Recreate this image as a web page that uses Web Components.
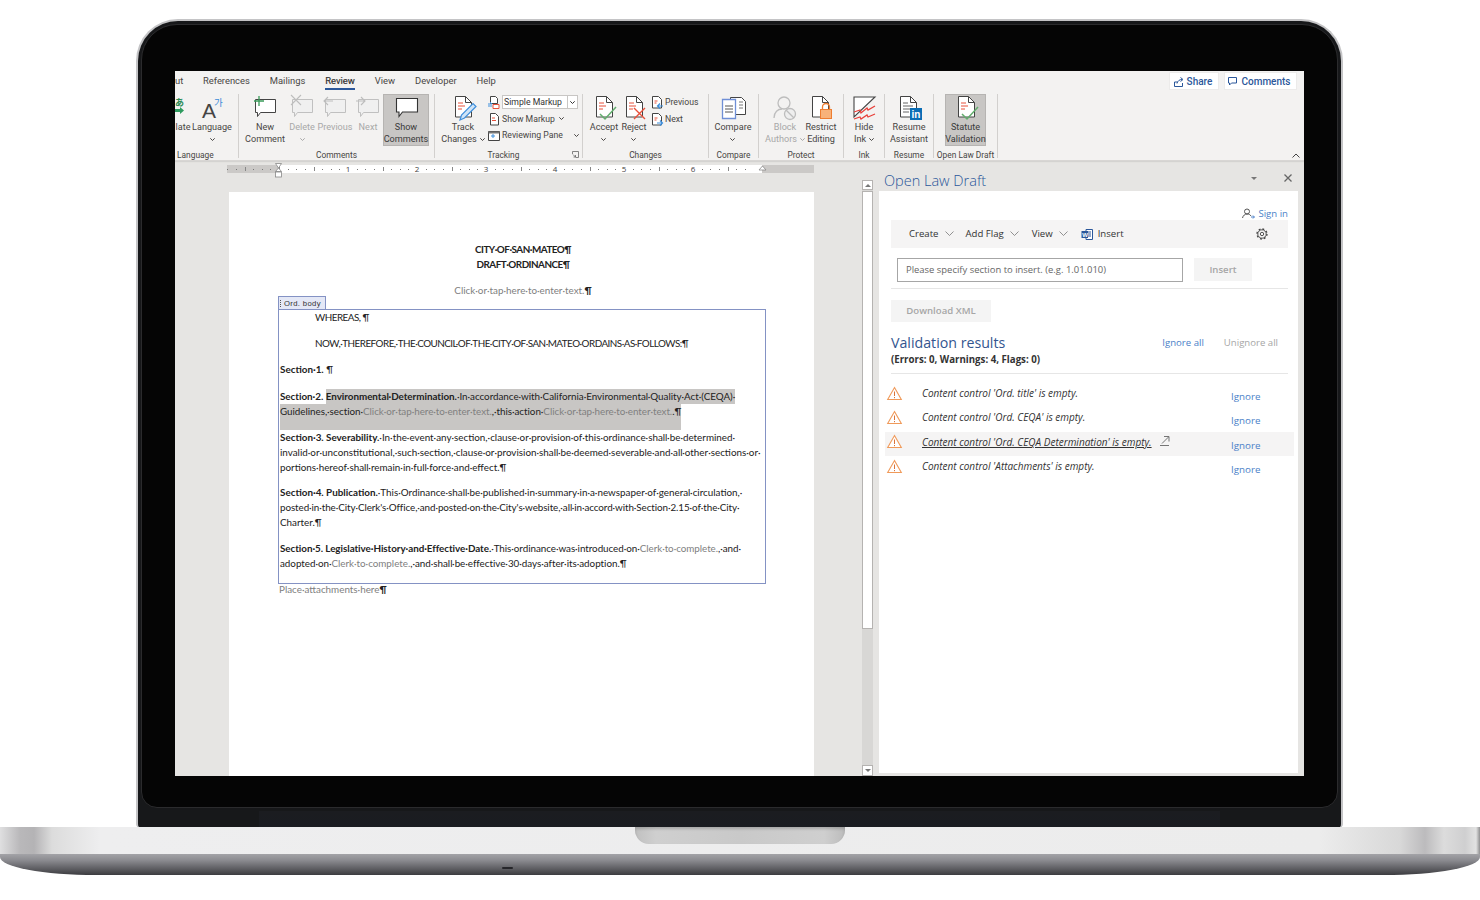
<!DOCTYPE html>
<html lang="en">
<head>
<meta charset="utf-8">
<title>Open Law Draft</title>
<style>
  html, body { margin: 0; padding: 0; background: #fff; }
  body { width: 1480px; height: 900px; overflow: hidden; font-family: "Open Sans", "Liberation Sans", sans-serif; }
</style>
</head>
<body>

<laptop-frame>
  <word-window>
    <ribbon-bar slot="ribbon">
      <ribbon-tab slot="tabs" style="width:8px;text-align:right">ut</ribbon-tab>
      <ribbon-tab slot="tabs">References</ribbon-tab>
      <ribbon-tab slot="tabs">Mailings</ribbon-tab>
      <ribbon-tab slot="tabs" active>Review</ribbon-tab>
      <ribbon-tab slot="tabs">View</ribbon-tab>
      <ribbon-tab slot="tabs">Developer</ribbon-tab>
      <ribbon-tab slot="tabs">Help</ribbon-tab>

      <top-button slot="actions" icon="share" w="48">Share</top-button>
      <top-button slot="actions" icon="chat" w="71">Comments</top-button>

      <ribbon-group w="64" label="Language" left>
        <ribbon-btn w="16" clip><ui-icon slot="icon" name="translate"></ui-icon>late</ribbon-btn>
        <ribbon-btn w="42"><ui-icon slot="icon" name="language"></ui-icon>Language<ui-caret block></ui-caret></ribbon-btn>
      </ribbon-group>
      <ribbon-group w="196" label="Comments" pad="4">
        <ribbon-btn w="44"><ui-icon slot="icon" name="newcomment"></ui-icon>New<br>Comment</ribbon-btn>
        <ribbon-btn w="30" dim><ui-icon slot="icon" name="delcomment"></ui-icon>Delete<ui-caret block></ui-caret></ribbon-btn>
        <ribbon-btn w="36" dim><ui-icon slot="icon" name="prevcomment"></ui-icon>Previous</ribbon-btn>
        <ribbon-btn w="30" dim><ui-icon slot="icon" name="nextcomment"></ui-icon>Next</ribbon-btn>
        <ribbon-btn w="46" active><ui-icon slot="icon" name="showcomment"></ui-icon>Show<br>Comments</ribbon-btn>
      </ribbon-group>
      <ribbon-group w="148" label="Tracking" pad="5" launcher>
        <ribbon-btn w="46"><ui-icon slot="icon" name="track"></ui-icon>Track<br>Changes<ui-caret></ui-caret></ribbon-btn>
        <mini-stack>
          <mini-row><ui-icon slot="icon" name="smallmarkup" size="14"></ui-icon><markup-select>Simple Markup</markup-select></mini-row>
          <mini-row><ui-icon slot="icon" name="smalldoc" size="14"></ui-icon>Show Markup<ui-caret></ui-caret></mini-row>
          <mini-row><ui-icon slot="icon" name="smallpane" size="14"></ui-icon><span style="margin-right:7px">Reviewing Pane</span><ui-caret></ui-caret></mini-row>
        </mini-stack>
      </ribbon-group>
      <ribbon-group w="126" label="Changes" pad="6">
        <ribbon-btn w="30"><ui-icon slot="icon" name="accept"></ui-icon>Accept<ui-caret block></ui-caret></ribbon-btn>
        <ribbon-btn w="30"><ui-icon slot="icon" name="reject"></ui-icon>Reject<ui-caret block></ui-caret></ribbon-btn>
        <mini-stack>
          <mini-row><ui-icon slot="icon" name="smallprev" size="14"></ui-icon>Previous</mini-row>
          <mini-row><ui-icon slot="icon" name="smallnext" size="14"></ui-icon>Next</mini-row>
        </mini-stack>
      </ribbon-group>
      <ribbon-group w="50" label="Compare">
        <ribbon-btn w="48"><ui-icon slot="icon" name="compare"></ui-icon>Compare<ui-caret block></ui-caret></ribbon-btn>
      </ribbon-group>
      <ribbon-group w="85" label="Protect" pad="7">
        <ribbon-btn w="38" dim><ui-icon slot="icon" name="block"></ui-icon>Block<br>Authors<ui-caret></ui-caret></ribbon-btn>
        <ribbon-btn w="34"><ui-icon slot="icon" name="restrict"></ui-icon>Restrict<br>Editing</ribbon-btn>
      </ribbon-group>
      <ribbon-group w="41" label="Ink">
        <ribbon-btn w="40"><ui-icon slot="icon" name="ink"></ui-icon>Hide<br>Ink<ui-caret></ui-caret></ribbon-btn>
      </ribbon-group>
      <ribbon-group w="49" label="Resume">
        <ribbon-btn w="48"><ui-icon slot="icon" name="resume"></ui-icon>Resume<br>Assistant</ribbon-btn>
      </ribbon-group>
      <ribbon-group w="64" label="Open Law Draft" pad="11">
        <ribbon-btn w="41" active><ui-icon slot="icon" name="accept"></ui-icon>Statute<br>Validation</ribbon-btn>
      </ribbon-group>
    </ribbon-bar>

    <doc-view slot="doc"></doc-view>
    <doc-scroll slot="scroll"></doc-scroll>

    <task-pane slot="pane">
      <validation-row>Content control 'Ord. title' is empty.</validation-row>
      <validation-row>Content control 'Ord. CEQA' is empty.</validation-row>
      <validation-row active>Content control 'Ord. CEQA Determination' is empty.</validation-row>
      <validation-row>Content control 'Attachments' is empty.</validation-row>
    </task-pane>
  </word-window>
</laptop-frame>

<script>
// ── Icons ────────────────────────────────────────────────────────────────
// Big ribbon icons are drawn on a 28x28 grid, small ones on their own size.

const DOC = (fill = '#fff') => `
  <path d="M6.5 2.5h10l6 6v14.5h-16z" fill="${fill}" stroke="#444"/>
  <path d="M16.5 2.5v6h6" fill="none" stroke="#444"/>`;
const MARKS = `<path d="M9 9h5M9 12h7M9 15h4" stroke="#e8503a" fill="none"/>`;
const BUBBLE = (c, fill) => `<path d="M4.5 5.5h20v13h-15l-3 4v-4h-2z" fill="${fill}" stroke="${c}"/>`;

const ICONS = {
  translate: `<text x="0" y="12" font-size="9" font-weight="700" fill="#2e8b57" font-family="'Noto Sans CJK JP',sans-serif">あ</text>
    <path d="M0 15h5v-2l4 3.500-4 3.500v-2H0z" fill="#2e9b5f"/>`,
  language: `<text x="4" y="24" font-size="21" fill="#444" font-family="'Liberation Sans',sans-serif">A</text>
    <text x="16" y="12" font-size="9.500" fill="#3c8ad8" font-family="'Noto Sans CJK KR',sans-serif">가</text>`,
  newcomment: BUBBLE('#444', '#fff') + `<path d="M8 2v10M3 7h10" stroke="#3a9a5a" stroke-width="1.3"/>`,
  delcomment: BUBBLE('#c0c0c0', '#f0f0f0') + `<path d="M3 1l10 10M13 1l-10 10" stroke="#bdbdbd" stroke-width="1.1"/>`,
  prevcomment: BUBBLE('#c0c0c0', '#f0f0f0') + `<path d="M12 7h-9M7 3l-4 4 4 4" stroke="#bdbdbd" fill="none" stroke-width="1.1"/>`,
  nextcomment: BUBBLE('#c0c0c0', '#f0f0f0') + `<path d="M2 7h9M7 3l4 4-4 4" stroke="#bdbdbd" fill="none" stroke-width="1.1"/>`,
  showcomment: `<path d="M4.5 4.5h21v13.5h-15l-3.5 4.5v-4.5h-2.500z" fill="#fff" stroke="#333" stroke-width="1.100"/>`,
  track: DOC() + MARKS + `<path d="M11 26l1.500-5L24 9.500l3 3L15.500 24z" fill="#cfe4f7" stroke="#3f8fdc" stroke-width="1.200"/>`,
  accept: DOC() + MARKS + `<path d="M10 20l5 5L26 13" fill="none" stroke="#62ad6d" stroke-width="1.500"/>`,
  reject: DOC() + MARKS + `<path d="M14 14l11 11M25 14L14 25" fill="none" stroke="#e8503a" stroke-width="1.400"/>`,
  compare: `<path d="M11.500 3.500h11l4 4v13h-15z" fill="#fff" stroke="#444"/>
    <path d="M20 8h4M20 11h4M20 14h4" stroke="#777"/>
    <path d="M3.500 5.500h13v19h-13z" fill="#fff" stroke="#6f8fd6" stroke-width="1.300"/>
    <path d="M6 12h8M6 15h8M6 18h8" stroke="#555"/>`,
  block: `<circle cx="13" cy="9" r="6" fill="none" stroke="#bdbdbd" stroke-width="1.300"/>
    <path d="M3 24c0-6 4-9 8-9" fill="none" stroke="#bdbdbd" stroke-width="1.300"/>
    <circle cx="19" cy="20" r="5.500" fill="#eee" stroke="#bdbdbd" stroke-width="1.300"/>
    <path d="M15 16l8 8" stroke="#bdbdbd" stroke-width="1.300"/>`,
  restrict: `<path d="M5.500 2.500h10l6 6v14.500h-16z" fill="#fff" stroke="#444"/><path d="M15.500 2.500v6h6" fill="none" stroke="#444"/>
    <path d="M15.500 16v-3a3.500 3.500 0 0 1 7 0v3" fill="none" stroke="#ed7d31" stroke-width="1.300"/>
    <rect x="13.500" y="15.500" width="11" height="9" fill="#f8b27a" stroke="#ed7d31"/>`,
  ink: `<path d="M4 3h21L4 23z" fill="#fff" stroke="#444" stroke-width="1.100"/>
    <path d="M4 18l6-2 1 3 6-5 1 2 7-4M4 25l6-2 1 2 6-4 1 2 7-3" fill="none" stroke="#e8403a" stroke-width="1.300"/>`,
  resume: `<path d="M5.500 2.500h10l6 6v14.500h-16z" fill="#fff" stroke="#444"/><path d="M15.500 2.500v6h6" fill="none" stroke="#444"/>
    <path d="M8 9h5M8 12h10M8 15h10M8 18h6" stroke="#666"/>
    <rect x="15" y="14" width="12" height="12" fill="#0a6db5"/>
    <text x="16.500" y="24" font-size="10" font-weight="700" fill="#fff" font-family="'Liberation Sans',sans-serif">in</text>`,

  smallmarkup: `<path d="M3.500 1.500h5l2 2v5h-7z" fill="#fff" stroke="#444"/><path d="M6 9.500h6v4H6z" fill="#fff" stroke="#e8503a"/><path d="M1 9h4l-2-2M1 11h4" fill="none" stroke="#3f8fdc"/>`,
  smalldoc: `<path d="M3.500 1.500h5l3 3v8.500h-8z" fill="#fff" stroke="#444"/><path d="M5 6h3M5 8.500h4" stroke="#e8503a"/>`,
  smallpane: `<path d="M1.500 3.500h11v9h-11z" fill="#fff" stroke="#444"/><path d="M1.500 3.500h11v2h-11z" fill="#777"/><path d="M4 8h4M6 6v4" stroke="#3f8fdc"/>`,
  smallprev: `<path d="M2.500 1.500h6l3 3v8.500h-9z" fill="#fff" stroke="#444"/><path d="M4.500 6h3M4.500 8h2" stroke="#e8503a"/><path d="M13 11H8M10 8.500L7.500 11l2.500 2.500" fill="none" stroke="#3f8fdc" stroke-width="1.200"/>`,
  smallnext: `<path d="M2.500 1.500h6l3 3v8.500h-9z" fill="#fff" stroke="#444"/><path d="M4.500 6h3M4.500 8h2" stroke="#e8503a"/><path d="M7 11h5M10 8.500l2.500 2.500-2.500 2.500" fill="none" stroke="#3f8fdc" stroke-width="1.200"/>`,

  share: `<path d="M1.500 6v4.500h8V7M1.500 6h3M4 7.500c.5-2.500 2.500-4 5-4M7.500 1.500l2.500 2-2.500 2" fill="none" stroke="#2b579a"/>`,
  chat: `<path d="M1.500 1.500h8v5.500h-5l-2 2v-2h-1z" fill="none" stroke="#2b579a"/>`,
  signin: `<circle cx="5" cy="3.500" r="2.500" fill="none" stroke="#555"/><path d="M.5 10c.5-2.500 2.500-4 4.500-4s3 .5 4 2" fill="none" stroke="#555"/><path d="M9 9h3M11 7.500L12.500 9 11 10.500" fill="none" stroke="#4a7fc8"/>`,
  word: `<path d="M5 1.500h6.500v10H5z" fill="#fff" stroke="#2b579a"/><path d="M7 4h3M7 6h3M7 8h3" stroke="#2b579a"/><rect x="0.500" y="3" width="6.500" height="7" fill="#2b579a"/>
    <text x="1.200" y="8.700" font-size="6" font-weight="700" fill="#fff" font-family="'Liberation Sans',sans-serif">W</text>`,
  gear: `<circle cx="6" cy="6" r="1.700" fill="none" stroke="#444" stroke-width=".9"/>
    <circle cx="6" cy="6" r="4.200" fill="none" stroke="#444" stroke-width=".9"/>
    <circle cx="6" cy="6" r="5" fill="none" stroke="#444" stroke-width="1.300" stroke-dasharray="1.900 2"/>`,
  warn: `<path d="M7.500 1.500L14.300 13.500H.7z" fill="#fff" stroke="#f09a5a" stroke-width="1.100"/><path d="M7.500 5.500v4.500M7.500 11v1.200" stroke="#d9733a"/>`,
  ext: `<path d="M1 10.500h9M3 8.500L9.500 2M5 1.500h5v5" fill="none" stroke="#666" stroke-width=".9"/>`
};

class UiIcon extends HTMLElement {
  connectedCallback() {
    const size = +this.getAttribute('size') || 28;
    const w = +this.getAttribute('w') || size;
    this.attachShadow({ mode: 'open' }).innerHTML = `
      <style>:host { display: block; width: ${w}px; height: ${size}px; flex: none; } svg { display: block; overflow: visible; }</style>
      <svg width="${w}" height="${size}" viewBox="0 0 ${w} ${size}">${ICONS[this.getAttribute('name')] || ''}</svg>`;
  }
}

class UiCaret extends HTMLElement {
  connectedCallback() {
    this.attachShadow({ mode: 'open' }).innerHTML = `
      <style>
        :host { display: inline-block; width: 5px; height: 3px; margin-left: 3px; vertical-align: 1px; }
        :host([block]) { display: block; margin: 5px auto 0; }
        svg { display: block; }
      </style>
      <svg width="5" height="3" viewBox="0 0 5 3"><path d="M.3.3l2.200 2.200L4.700.3" fill="none" stroke="currentColor"/></svg>`;
  }
}

// ── Laptop shell ─────────────────────────────────────────────────────────

class LaptopFrame extends HTMLElement {
  constructor() {
    super();
    this.attachShadow({ mode: 'open' }).innerHTML = `
      <style>
        :host { display: block; width: 1480px; padding-top: 19px; }
        .lid {
          box-sizing: border-box; width: 1207px; height: 808px; margin-left: 136px;
          border: 2px solid #c4c4c6; border-bottom: 0; border-radius: 42px 42px 3px 3px;
          background: #17181a; padding: 3px 3px 0; display: flex; flex-direction: column;
        }
        .bezel {
          box-sizing: border-box; height: 784px; flex: none; background: #050505;
          border: 1px solid #2b2b2d; border-radius: 36px 36px 16px 16px;
          padding: 46px 33px 0;
        }
        .hinge { flex: 1; margin: 3px 118px 0; background: linear-gradient(#1b1c20, #1a1c21); }
        .screen { height: 705px; overflow: hidden; }
        .top {
          height: 27px;
          background: linear-gradient(90deg, #dfdfe0 0, #b9b8ba 20px, #b4b3b5 34px, #dcdcdc 52px, #eeeeef 100px, #ececec 1320px, #d8d8d8 1400px, #bcbbbd 1425px, #dcdcdc 1444px, #cfcfd0 1465px, #e2e2e2 1476px, #8f8f90 1480px);
        }
        .notch {
          width: 210px; height: 17px; margin: 0 auto; border-radius: 0 0 14px 14px;
          background: linear-gradient(90deg, #c0c0c0, #cfcfcf 10%, #c9c9c9 50%, #cfcfcf 90%, #bcbcbc);
          box-shadow: inset 0 2px 3px rgba(0,0,0,.18);
        }
        .lower {
          height: 21px; overflow: hidden;
          border-radius: 0 0 96px 96px / 0 0 18px 18px;
          background: linear-gradient(#a3a3a7, #8b8b90 30%, #4d4d51 85%, #3c3c40);
        }
        .foot { width: 11px; height: 2px; margin: 13px 0 0 502px; border-radius: 1px; background: #26262a; }
      </style>
      <div class="lid">
        <div class="bezel"><div class="screen"><slot></slot></div></div>
        <div class="hinge"></div>
      </div>
      <div class="top"><div class="notch"></div></div>
      <div class="lower"><div class="foot"></div></div>`;
  }
}

class WordWindow extends HTMLElement {
  constructor() {
    super();
    this.attachShadow({ mode: 'open' }).innerHTML = `
      <style>
        :host { display: block; height: 705px; width: 1129px; background: #e6e5e3; overflow: hidden; }
        .area { display: flex; height: 615px; }
      </style>
      <slot name="ribbon"></slot>
      <div class="area">
        <slot name="doc"></slot>
        <slot name="scroll"></slot>
        <slot name="pane"></slot>
      </div>`;
  }
}

// ── Ribbon ───────────────────────────────────────────────────────────────

class RibbonBar extends HTMLElement {
  constructor() {
    super();
    this.attachShadow({ mode: 'open' }).innerHTML = `
      <style>
        :host {
          display: block; position: relative; height: 90px; box-sizing: border-box;
          background: #f3f2f1; border-bottom: 1px solid #d8d6d4; box-shadow: 0 1px 1px #d4d3d1;
          font: 9.100px/12px Roboto, "Open Sans", sans-serif; color: #484644;
        }
        .tabs { display: flex; height: 23px; padding-right: 8px; }
        .tablist { display: flex; gap: 20px; }
        .actions { display: flex; gap: 7px; margin-left: auto; padding-top: 2px; }
        .groups { display: flex; height: 66px; }
        svg { position: absolute; right: 4px; bottom: 2px; }
      </style>
      <div class="tabs">
        <div class="tablist"><slot name="tabs"></slot></div>
        <div class="actions"><slot name="actions"></slot></div>
      </div>
      <div class="groups"><slot></slot></div>
      <svg width="8" height="5" viewBox="0 0 8 5"><path d="M.5 4.500L4 1l3.500 3.500" fill="none" stroke="#444"/></svg>`;
  }
}

class RibbonTab extends HTMLElement {
  constructor() {
    super();
    this.attachShadow({ mode: 'open' }).innerHTML = `
      <style>
        :host { display: block; height: 19px; line-height: 20px; font-size: 9.400px; box-sizing: border-box; white-space: nowrap; }
        :host([active]) { border-bottom: 2px solid #2b579a; color: #333; -webkit-text-stroke: .2px #333; }
      </style><slot></slot>`;
  }
}

class TopButton extends HTMLElement {
  connectedCallback() {
    this.attachShadow({ mode: 'open' }).innerHTML = `
      <style>
        :host {
          display: flex; align-items: center; justify-content: center; gap: 3px;
          box-sizing: border-box; width: ${this.getAttribute('w')}px; height: 16px; font-size: 10px; line-height: 17px; padding-right: 3px;
          background: #fff; box-shadow: 0 0 0 1px #ecebea; color: #2b579a; font-weight: 500;
        }
      </style>
      <ui-icon name="${this.getAttribute('icon')}" size="10" w="11"></ui-icon><slot></slot>`;
  }
}

class RibbonGroup extends HTMLElement {
  connectedCallback() {
    const launcher = this.hasAttribute('launcher');
    const left = this.hasAttribute('left');
    this.attachShadow({ mode: 'open' }).innerHTML = `
      <style>
        :host {
          display: block; position: relative; box-sizing: border-box; flex: none; overflow: hidden;
          width: ${this.getAttribute('w')}px; height: 66px;
        }
        .sep { position: absolute; right: 0; top: 0; bottom: 2px; width: 1px; background: #d2d0ce; }
        .body { display: flex; height: 52px; padding-left: ${this.getAttribute('pad') || 0}px; }
        .label {
          height: 14px; line-height: 18px; font-size: 8.400px; text-align: ${left ? 'left' : 'center'}; white-space: nowrap;
          padding: 0 ${launcher ? 11 : 1}px 0 ${left ? 2 : 0}px;
        }
        .launch { position: absolute; right: 4px; bottom: 2px; display: ${launcher ? 'block' : 'none'}; }
      </style>
      <div class="body"><slot></slot></div>
      <div class="label">${this.getAttribute('label')}</div>
      <svg class="launch" width="7" height="7" viewBox="0 0 7 7"><path d="M.5 3V.5h6v6H3.500M1 3.500l2.500 2.500M3.500 4v2h-2" fill="none" stroke="#666" stroke-width=".8"/></svg>
      <div class="sep"></div>`;
  }
}

class RibbonBtn extends HTMLElement {
  connectedCallback() {
    const clip = this.hasAttribute('clip');
    this.attachShadow({ mode: 'open' }).innerHTML = `
      <style>
        :host {
          display: flex; flex-direction: column; align-items: center; flex: none;
          width: ${this.getAttribute('w')}px; height: 52px; text-align: center; white-space: nowrap;
        }
        :host([dim]) { color: #a8a8a8; }
        :host([active]) { background: #c8c6c4; box-shadow: inset 0 0 0 1px #b6b4b2; color: #3a3a3a; }
        .icon { height: 27px; width: ${clip ? 16 : 28}px; flex: none; }
        .text { display: block; }
      </style>
      <div class="icon"><slot name="icon"></slot></div>
      <div class="text"><slot></slot></div>`;
  }
}

class MiniStack extends HTMLElement {
  connectedCallback() {
    this.attachShadow({ mode: 'open' }).innerHTML = `
      <style>:host { display: flex; flex-direction: column; padding: 0 0 0 1px; }</style><slot></slot>`;
  }
}

class MiniRow extends HTMLElement {
  constructor() {
    super();
    this.attachShadow({ mode: 'open' }).innerHTML = `
      <style>
        :host { display: flex; align-items: center; gap: 1px; height: 16.500px; white-space: nowrap; font-size: 8.700px; }
      </style><slot name="icon"></slot><slot></slot>`;
  }
}

class MarkupSelect extends HTMLElement {
  constructor() {
    super();
    this.attachShadow({ mode: 'open' }).innerHTML = `
      <style>
        :host {
          display: flex; box-sizing: border-box; width: 76px; height: 14px; align-items: center;
          background: #fff; border: 1px solid #c8c6c4; padding-left: 1px; color: #333; font-size: 8.700px;
        }
        .drop { margin-left: auto; width: 9px; height: 12px; border-left: 1px solid #c8c6c4; display: flex; align-items: center; justify-content: center; }
      </style><slot></slot><div class="drop"><ui-caret style="margin:0"></ui-caret></div>`;
  }
}

// ── Document ─────────────────────────────────────────────────────────────

class DocRuler extends HTMLElement {
  connectedCallback() {
    const zero = 52, inch = 69;
    let marks = '';
    for (let i = -6; i <= 54; i++) {
      const x = zero + i * inch / 8;
      if (x > 584) break;
      if (i % 8 === 0 && i > 0) {
        marks += `<text x="${x}" y="7" text-anchor="middle" font-size="8" fill="#444" font-family="'Open Sans',sans-serif">${i / 8}</text>`;
      } else if (i % 4 === 0) {
        marks += `<rect x="${Math.round(x)}" y="2" width="1" height="4" fill="#888"/>`;
      } else if (i !== 0) {
        marks += `<rect x="${Math.round(x)}" y="4" width="1" height="1" fill="#777"/>`;
      }
    }
    this.attachShadow({ mode: 'open' }).innerHTML = `
      <style>
        :host { display: block; position: relative; width: 587px; height: 8px; margin: 4px 0 0 52px;
          background: linear-gradient(90deg, #cbc9c7 52px, #fff 52px, #fff 535px, #cbc9c7 535px); }
        svg { display: block; overflow: visible; }
        .marker { position: absolute; top: -2px; }
      </style>
      <svg width="587" height="8" viewBox="0 0 587 8">${marks}</svg>
      <svg class="marker" style="left:48px" width="8" height="16" viewBox="0 0 8 16">
        <path d="M.5.500h6L3.500 5zM3.500 5l3 3.500h-6z" fill="#fff" stroke="#888" stroke-width=".8"/>
        <rect x=".5" y="9" width="6" height="5" fill="#fff" stroke="#888" stroke-width=".8"/>
      </svg>
      <svg class="marker" style="left:532px" width="8" height="10" viewBox="0 0 8 10">
        <path d="M3.500 3l3.500 4h-7z" fill="#fff" stroke="#888" stroke-width=".8"/>
      </svg>`;
  }
}

class DocPage extends HTMLElement {
  constructor() {
    super();
    this.attachShadow({ mode: 'open' }).innerHTML = `
      <style>
        :host {
          display: block; box-sizing: border-box; width: 585px; height: 640px; margin: 19px 0 0 54px;
          padding: 49.500px 0 0 49px; background: #fff; color: #222;
          font: 9.850px/15px Lato, "Open Sans", sans-serif;
        }
        b { font-weight: 700; }
        i { font-style: normal; color: #808080; }
        .line { white-space: nowrap; height: 15px; }
        .center { width: 490px; text-align: center; }
        .gap { margin-top: 11px; }
        .caps { letter-spacing: -.5px; }
        .tag {
          box-sizing: border-box; width: 48px; height: 13px; margin: -2px 0 0 0; position: relative; z-index: 1;
          border: 1px solid #8492c4; border-bottom: 0; background: #e4e8f6;
          font: 7.700px/13px "Liberation Sans", sans-serif; letter-spacing: .35px; color: #333; padding-left: 1px; white-space: nowrap; display: flex;
        }
        .tag .grip { display: block; width: 0; height: 7px; margin: 3px 3px 0 0; border-left: 1px dotted #555; }
        .box { box-sizing: border-box; width: 488px; height: 275px; border: 1px solid #8492c4; padding: 0 0 0 1px; }
        .ind { padding-left: 35px; }
        .hl { background: #c8c6c4; display: inline-block; height: 15px; }
        .tall { height: 26px; vertical-align: top; }
        .place { line-height: 11px; height: 11px; color: #808080; margin-left: 1px; }
      </style>
      <div class="line center caps"><b>CITY·OF·SAN·MATEO¶</b></div>
      <div class="line center caps"><b>DRAFT·ORDINANCE¶</b></div>
      <div class="line center gap"><i>Click·or·tap·here·to·enter·text.</i><b>¶</b></div>
      <div class="tag"><span class="grip"></span>Ord. body</div>
      <div class="box">
        <div class="line ind caps">WHEREAS, ¶</div>
        <div class="line ind gap caps">NOW,·THEREFORE,·THE·COUNCIL·OF·THE·CITY·OF·SAN·MATEO·ORDAINS·AS·FOLLOWS:¶</div>
        <div class="line gap"><b>Section·1.</b> ¶</div>
        <div class="line" style="margin-top:12px;letter-spacing:-.03px"><b>Section·2.</b> <span class="hl"><b>Environmental·Determination.</b>·In·accordance·with·California·Environmental·Quality·Act·(CEQA)·</span></div>
        <div class="line" style="letter-spacing:-.04px"><span class="hl tall">Guidelines,·section·<i>Click·or·tap·here·to·enter·text.</i>,·this·action·<i>Click·or·tap·here·to·enter·text.</i>.¶</span></div>
        <div class="line" style="height:11px"></div>
        <div class="line"><b>Section·3. Severability.</b>·In·the·event·any·section,·clause·or·provision·of·this·ordinance·shall·be·determined·</div>
        <div class="line">invalid·or·unconstitutional,·such·section,·clause·or·provision·shall·be·deemed·severable·and·all·other·sections·or·</div>
        <div class="line">portions·hereof·shall·remain·in·full·force·and·effect.¶</div>
        <div class="line" style="margin-top:10px"><b>Section·4. Publication.</b>·This·Ordinance·shall·be·published·in·summary·in·a·newspaper·of·general·circulation,·</div>
        <div class="line" style="letter-spacing:-.08px">posted·in·the·City·Clerk's·Office,·and·posted·on·the·City's·website,·all·in·accord·with·Section·2.15·of·the·City·</div>
        <div class="line">Charter.¶</div>
        <div class="line gap" style="letter-spacing:-.05px"><b>Section·5. Legislative·History·and·Effective·Date.</b>·This·ordinance·was·introduced·on·<i>Clerk·to·complete.</i>,·and·</div>
        <div class="line" style="letter-spacing:-.03px">adopted·on·<i>Clerk·to·complete.</i>,·and·shall·be·effective·30·days·after·its·adoption.¶</div>
      </div>
      <div class="line place">Place·attachments·here<b style="color:#222">¶</b></div>`;
  }
}

class DocView extends HTMLElement {
  constructor() {
    super();
    this.attachShadow({ mode: 'open' }).innerHTML = `
      <style>:host { display: block; flex: none; width: 687px; height: 615px; overflow: hidden; }</style>
      <doc-ruler></doc-ruler><doc-page></doc-page>`;
  }
}

class DocScroll extends HTMLElement {
  constructor() {
    super();
    this.attachShadow({ mode: 'open' }).innerHTML = `
      <style>
        :host { display: flex; flex-direction: column; flex: none; width: 11px; margin: 19px 2px 0 0; height: 596px; background: #d8d7d5; }
        .btn { box-sizing: border-box; height: 10px; flex: none; background: #fff; border: 1px solid #b5b3b1; display: flex; align-items: center; justify-content: center; }
        .thumb { box-sizing: border-box; height: 438px; flex: none; margin-top: 1px; background: #fff; border: 1px solid #b5b3b1; }
        .track { flex: 1; }
        .up { width: 0; height: 0; border: 3px solid transparent; border-top: 0; border-bottom: 3px solid #777; }
        .down { width: 0; height: 0; border: 3px solid transparent; border-bottom: 0; border-top: 3px solid #777; }
      </style>
      <div class="btn"><div class="up"></div></div>
      <div class="thumb"></div>
      <div class="track"></div>
      <div class="btn" style="height:11px"><div class="down"></div></div>`;
  }
}

// ── Task pane ────────────────────────────────────────────────────────────

class TaskPane extends HTMLElement {
  constructor() {
    super();
    const chev = `<svg class="chev" width="9" height="6" viewBox="0 0 9 6"><path d="M.5.500L4.500 4.500 8.500.500" fill="none" stroke="#777" stroke-width=".8"/></svg>`;
    this.attachShadow({ mode: 'open' }).innerHTML = `
      <style>
        :host {
          display: flex; flex-direction: column; flex: none; box-sizing: border-box; width: 429px; height: 615px;
          padding: 0 6px 3px 4px; font: 9.600px/14px "Open Sans", "Liberation Sans", sans-serif; color: #333;
        }
        .head { display: flex; align-items: center; box-sizing: border-box; height: 30px; flex: none; padding: 4px 0 0 5px; }
        .title { font-size: 14.500px; font-weight: 300; color: #2b579a; line-height: 24px; padding-top: 5px; white-space: nowrap; }
        .tri { margin-left: auto; width: 0; height: 0; border: 3px solid transparent; border-bottom: 0; border-top: 3px solid #777; margin-right: 27px; }
        .x { margin-right: 6px; }
        .body { flex: 1; background: #fff; padding: 14px 10px 0 12px; min-height: 0; }
        .signin { display: flex; justify-content: flex-end; align-items: center; gap: 3px; height: 15px; color: #4a7fc8; position: relative; top: 1px; }
        .tools { display: flex; align-items: center; height: 28px; background: #f5f4f4; padding-left: 18px; }
        .tools span { white-space: nowrap; }
        .chev { margin: 0 13px 0 6px; }
        .chev.first { margin-right: 12px; }
        .inputrow { display: flex; gap: 11px; margin: 10px 0 0 6px; }
        .input { box-sizing: border-box; width: 286px; height: 24px; border: 1px solid #a6a6a6; padding-left: 8px; line-height: 22px; font-size: 9.450px; color: #666; white-space: nowrap; }
        .btn { height: 23px; line-height: 24px; background: #f4f4f4; color: #a6a6a6; font-weight: 600; text-align: center; }
        .rule { height: 1px; background: #e6e6e6; flex: none; }
        .results { display: flex; align-items: center; height: 18px; margin-top: 12px; }
        .results h2 { margin: 0; font-size: 14.200px; font-weight: 400; color: #33558f; white-space: nowrap; line-height: 18px; }
        .link { color: #4a7fc8; }
        .off { color: #a6a6a6; }
        .counts { font-weight: 700; font-size: 9.700px; line-height: 16px; color: #333; white-space: nowrap; }
      </style>
      <div class="head">
        <span class="title">Open Law Draft</span>
        <div class="tri"></div>
        <svg class="x" width="8" height="8" viewBox="0 0 8 8"><path d="M.5.500l7 7M7.500.500l-7 7" stroke="#666" stroke-width="1.300"/></svg>
      </div>
      <div class="body">
        <div class="signin"><ui-icon name="signin" size="11" w="13"></ui-icon><span>Sign in</span></div>
        <div class="tools">
          <span>Create</span>${chev.replace('class="chev"', 'class="chev first"')}
          <span>Add Flag</span>${chev}
          <span>View</span>${chev}
          <ui-icon name="word" size="12" w="12" style="margin-right:5px"></ui-icon><span>Insert</span>
          <ui-icon name="gear" size="12" w="12" style="margin-left:auto;margin-right:20px"></ui-icon>
        </div>
        <div class="inputrow">
          <div class="input">Please specify section to insert. (e.g. 1.01.010)</div>
          <div class="btn" style="width:58px">Insert</div>
        </div>
        <div class="rule" style="margin-top:6px"></div>
        <div class="btn" style="width:100px;height:22px;line-height:22px;margin-top:11px">Download XML</div>
        <div class="results">
          <h2>Validation results</h2>
          <span class="link" style="margin-left:auto">Ignore all</span>
          <span class="off" style="margin:0 10px 0 20px">Unignore all</span>
        </div>
        <div class="counts">(Errors: 0, Warnings: 4, Flags: 0)</div>
        <div class="rule" style="margin:5px 0 9px"></div>
        <slot></slot>
      </div>`;
  }
}

class ValidationRow extends HTMLElement {
  connectedCallback() {
    const active = this.hasAttribute('active');
    this.attachShadow({ mode: 'open' }).innerHTML = `
      <style>
        :host { display: flex; box-sizing: border-box; height: 24.400px; margin: 0 -6px; padding-left: 2px; font-style: italic; font-size: 10px; }
        :host([active]) { background: #f5f4f4; }
        .icon { width: 35px; flex: none; padding-top: 2.500px; }
        .msg { width: 309px; flex: none; padding-top: 3px; white-space: nowrap; display: flex; align-items: flex-start; gap: 7px; }
        .msg span { ${active ? 'text-decoration: underline;' : ''} }
        .ignore { font-style: normal; color: #4a7fc8; padding-top: 7px; font-size: 9.800px; }
      </style>
      <div class="icon"><ui-icon name="warn" size="15" w="15"></ui-icon></div>
      <div class="msg"><span><slot></slot></span>${active ? '<ui-icon name="ext" size="11" w="11"></ui-icon>' : ''}</div>
      <div class="ignore">Ignore</div>`;
  }
}

const COMPONENTS = {
  'ui-icon': UiIcon, 'ui-caret': UiCaret, 'laptop-frame': LaptopFrame, 'word-window': WordWindow,
  'ribbon-bar': RibbonBar, 'ribbon-tab': RibbonTab, 'top-button': TopButton, 'ribbon-group': RibbonGroup,
  'ribbon-btn': RibbonBtn, 'mini-stack': MiniStack, 'mini-row': MiniRow, 'markup-select': MarkupSelect,
  'doc-ruler': DocRuler, 'doc-page': DocPage, 'doc-view': DocView, 'doc-scroll': DocScroll,
  'task-pane': TaskPane, 'validation-row': ValidationRow
};
Object.entries(COMPONENTS).forEach(([name, cls]) => customElements.define(name, cls));
</script>
</body>
</html>
